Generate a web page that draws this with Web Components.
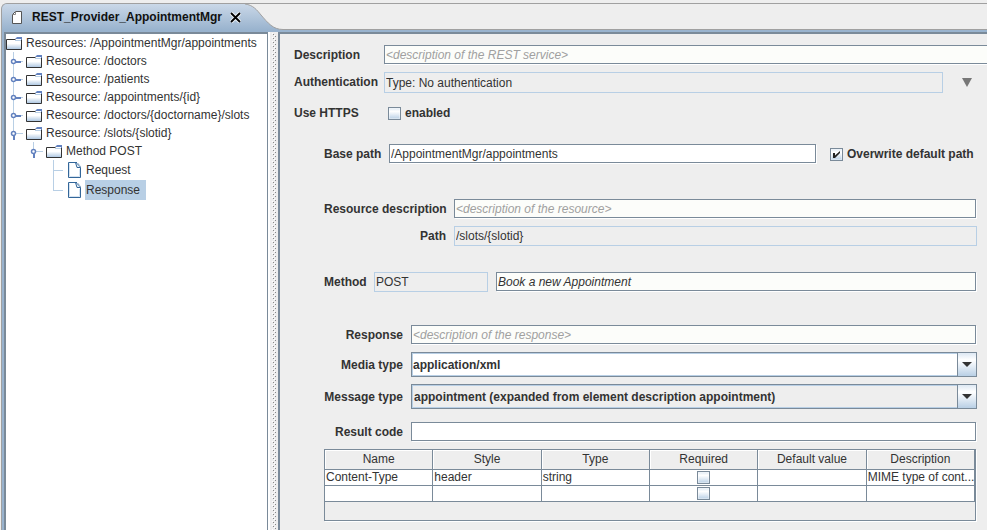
<!DOCTYPE html>
<html lang="en">
<head>
<meta charset="utf-8">
<title>REST_Provider_AppointmentMgr</title>
<style>
  html, body { height: 100%; }
  body {
    margin: 0; background: #eee; overflow: hidden;
    font: 12px/16px "Liberation Sans", Arial, sans-serif; color: #333;
    --line: #7a8a99; --soft: #b8cfe5; --blue: #99b3ce; --bg: #eee;
    --metal: linear-gradient(#dde8f3, #fff 30%, #e3ecf5 60%, #b8cfe5);
  }
</style>
</head>
<body>
<editor-window>
  <editor-tab slot="tab">REST_Provider_AppointmentMgr</editor-tab>
  <tree-node slot="tree" open="root" label="Resources: /AppointmentMgr/appointments">
    <tree-node handle="closed" label="Resource: /doctors"></tree-node>
    <tree-node handle="closed" label="Resource: /patients"></tree-node>
    <tree-node handle="closed" label="Resource: /appointments/{id}"></tree-node>
    <tree-node handle="closed" label="Resource: /doctors/{doctorname}/slots"></tree-node>
    <tree-node handle="open" label="Resource: /slots/{slotid}">
      <tree-node handle="open" label="Method POST">
        <tree-node handle="mid" icon="file" label="Request"></tree-node>
        <tree-node handle="last" icon="file" label="Response" selected></tree-node>
      </tree-node>
    </tree-node>
  </tree-node>
  <service-form></service-form>
</editor-window>

<script>
const define = (name, render) => customElements.define(name, class extends HTMLElement {
  connectedCallback() {
    if (this.shadowRoot) return;
    this.attachShadow({ mode: 'open' }).innerHTML = render(this);
  }
});
const attr = (el, name, fallback = '') => el.getAttribute(name) ?? fallback;
const esc = s => s.replace(/&/g, '&amp;').replace(/</g, '&lt;').replace(/"/g, '&quot;');

define('editor-window', () => `
<style>
  :host { display: flex; flex-direction: column; box-sizing: border-box; height: 100vh; padding: 3px 0 0 1px; }
  .frame { flex: 1; min-height: 0; display: flex; flex-direction: column; background: var(--blue);
    border: solid #a0a0a0; border-width: 1px 0 0 1px; border-top-left-radius: 6px; overflow: hidden; }
  .strip { display: flex; height: 26px; }
  .rest { flex: 1; background: var(--bg); border-bottom: 1px solid #a0a0a0; }
  .body { flex: 1; min-height: 0; display: flex; padding: 2px 0 0 2px; }
  nav { flex: 0 0 261px; background: #fff; border: solid var(--line); border-width: 2px 1px 0 2px; overflow: hidden; }
  .split { flex: 0 0 8px; border-left: 2px solid #fff; background:
    repeating-linear-gradient(#888 0 1px, transparent 1px 4px) 3px 2px / 1px 100% no-repeat,
    repeating-linear-gradient(#888 0 1px, transparent 1px 4px) 5px 4px / 1px 100% no-repeat,
    repeating-linear-gradient(#fff 0 1px, transparent 1px 4px) 2px 1px / 1px 100% no-repeat,
    repeating-linear-gradient(#fff 0 1px, transparent 1px 4px) 4px 3px / 1px 100% no-repeat, var(--bg); }
  main { flex: 1; min-width: 0; background: var(--bg); border: solid var(--line); border-width: 2px 0 0 2px; overflow: hidden; }
</style>
<div class="frame">
  <div class="strip"><slot name="tab"></slot><div class="rest"></div></div>
  <div class="body">
    <nav aria-label="Resources" role="tree"><slot name="tree"></slot></nav>
    <div class="split" role="separator"></div>
    <main><slot></slot></main>
  </div>
</div>`);

define('editor-tab', () => `
<style>
  :host { display: flex; --tab: linear-gradient(#cad8e8, #99b3ce); }
  .tab { display: flex; align-items: center; box-sizing: border-box; min-width: 241px; padding: 0 2px 0 10px;
    background: var(--tab); color: #111; font-weight: bold; }
  .name { flex: 1; padding-left: 10px; }
  svg { display: block; }
  button { padding: 0; margin-left: 8px; border: 0; background: none; }
  .slant { flex: none; }
</style>
<div class="tab">
  <svg width="10" height="13" viewBox="0 0 10 13"><path d="M3.5.5h6v12h-9v-9z" fill="#fff" stroke="#555"/><path d="M3.5.5v3h-3" fill="none" stroke="#888"/></svg>
  <span class="name"><slot></slot></span>
  <button aria-label="Close tab"><svg width="11" height="11" viewBox="0 0 11 11"><path d="M1 1l9 9M10 1l-9 9" stroke="#fff" stroke-width="4" opacity=".75"/><path d="M1 1l9 9M10 1l-9 9" stroke="#000" stroke-width="1.8"/></svg></button>
</div>
<svg class="slant" width="40" height="26" viewBox="0 0 40 26">
  <defs><linearGradient id="g" x2="0" y2="1"><stop stop-color="#cad8e8"/><stop offset="1" stop-color="#99b3ce"/></linearGradient></defs>
  <rect width="40" height="26" fill="#eee"/>
  <path d="M0 0H2C10 1 14 6 18 11C25 19 30 25.500 40 25.500V26H0z" fill="url(#g)"/>
  <path d="M2 0C10 1 14 6 18 11C25 19 30 25.500 40 25.500" fill="none" stroke="#a0a0a0"/>
</svg>`);

const FOLDER = `<svg width="19" height="18" viewBox="0 0 19 18">
  <defs><linearGradient id="f" x2="0" y2="1"><stop stop-color="#fff"/><stop offset=".4" stop-color="#fff"/><stop offset="1" stop-color="#a9c4e0"/></linearGradient></defs>
  <path d="M.5 5.500H15.500V15.500H.5z" fill="url(#f)"/>
  <path d="M9 6.500H15.500" stroke="#b8cfe5"/>
  <path d="M9.500 5.500H.5V15.500H15.500V6" fill="none" stroke="#333"/>
  <path d="M9 5L11 3H16V6H14V5z" fill="#6382bf"/><path d="M10 5.500H15" stroke="#fff"/></svg>`;
const FILE = `<svg width="19" height="20" viewBox="0 0 19 20">
  <path d="M2.500 2.500H9.500L14.500 7.500V17.500H2.500z" fill="#fff" stroke="#336699"/>
  <path d="M3.500 16.500V3.500M4 16.500H13.500V9" fill="none" stroke="#d5e3f1"/>
  <path d="M9.500 2.500L11 7.500H14.500" fill="#e8f0f8" stroke="#336699"/><path d="M9 2.500h2l3.500 4" fill="none" stroke="#336699" stroke-dasharray="2 1"/></svg>`;

function handle(kind) {
  const p = {
    closed: `<path d="M7.500 0V18M11 9.500H17" stroke="#b8cfe5"/><path d="M9 10H15" stroke="#6382bf" stroke-width="2"/><circle cx="7.500" cy="9.500" r="2" fill="#fff" stroke="#6382bf" stroke-width="1.500"/>`,
    open: `<path d="M7.500 0V8M10 9.500H17" stroke="#b8cfe5"/><path d="M8 11V16" stroke="#6382bf" stroke-width="2"/><circle cx="7.500" cy="9.500" r="2" fill="#fff" stroke="#6382bf" stroke-width="1.500"/>`,
    mid: `<path d="M7.500 0V20M7 10.500H17" stroke="#b8cfe5"/>`,
    last: `<path d="M7.500 0V11M7 10.500H17" stroke="#b8cfe5"/>`
  }[kind];
  return p ? `<svg width="20" height="${kind === 'mid' || kind === 'last' ? 20 : 18}">${p}</svg>` : '';
}

define('tree-node', el => {
  const file = attr(el, 'icon') === 'file', root = el.hasAttribute('open');
  return `
<style>
  :host { display: block; white-space: nowrap; }
  .row { display: flex; height: ${file ? 20 : 18}px; line-height: ${file ? 20 : 18}px; }
  svg { flex: none; display: block; }
  .label { padding: 0 6px 0 1px; }
  :host([selected]) .label { background: var(--soft); }
  .kids { padding-left: ${root ? 0 : 20}px; }
</style>
<div role="treeitem"><div class="row">${handle(attr(el, 'handle'))}${file ? FILE : FOLDER}<span class="label">${esc(attr(el, 'label'))}</span></div>
<div class="kids" role="group"><slot></slot></div></div>`;
});

const FIELD_CSS = `
  * { box-sizing: border-box; }
  label { flex: 0 0 var(--label, auto); min-width: 0; padding-right: 8px; font-weight: bold; line-height: 20px; text-align: right; white-space: nowrap; }
  :host([left]) label { padding-right: 0; text-align: left; }`;

define('text-field', el => `
<style>
  ${FIELD_CSS}
  :host { display: flex; min-width: 0; }
  input { flex: 1; min-width: 0; width: 0; height: 19px; margin: 0 1px 0 0; padding: 0 1px; border: 1px solid var(--line); border-radius: 0;
    background: #fff; box-shadow: 1px 1px #fff; font: inherit; color: inherit; outline: 0; }
  input::placeholder { color: #a0a0a0; opacity: 1; }
  :host([italic]) input { font-style: italic; background: #fcfdfa; }
  input:read-only { height: 20px; margin: 0; border-color: var(--soft); background: var(--bg); box-shadow: none; }
  :host([tall]) input { height: 21px; }
</style>
${el.hasAttribute('label') ? `<label for="i">${attr(el, 'label')}</label>` : ''}
<input id="i" type="text" value="${esc(attr(el, 'value'))}" placeholder="${esc(attr(el, 'placeholder'))}"
  ${el.hasAttribute('label') ? '' : `aria-label="${attr(el, 'name')}"`} ${el.hasAttribute('readonly') ? 'readonly' : ''}>`);

define('check-box', el => `
<style>
  :host { display: flex; align-items: center; font-weight: bold; white-space: nowrap; }
  label { padding-left: 4px; }
  input { appearance: none; flex: none; display: block; width: 13px; height: 13px; margin: 0; border: 1px solid var(--line);
    background: var(--metal); box-shadow: inset 0 0 0 1px #ffffff66; }
  .box { display: grid; }
  .box > * { grid-area: 1 / 1; }
  svg { display: none; pointer-events: none; }
  input:checked + svg { display: block; }
</style>
<span class="box"><input id="c" type="checkbox" ${el.hasAttribute('checked') ? 'checked' : ''} ${el.hasAttribute('label') ? '' : 'aria-label="Required"'}>
<svg width="13" height="13" viewBox="0 0 13 13"><path d="M3 5H5V7.500L10 3V5L5 10H3z" fill="#222"/></svg></span>
${el.hasAttribute('label') ? `<label for="c">${attr(el, 'label')}</label>` : ''}`);

define('combo-box', el => `
<style>
  ${FIELD_CSS}
  :host { display: flex; align-items: center; }
  .box { flex: 1; min-width: 0; display: grid; grid-template-columns: 1fr 20px; height: 25px; }
  select { grid-area: 1 / 1 / 2 / 3; appearance: none; width: 100%; height: 25px; margin: 0; padding: 0 22px 0 1px; border: 1px solid var(--line);
    border-radius: 0; background: #fff; box-shadow: inset 0 0 0 1px var(--soft); font: inherit; font-weight: bold; color: inherit; outline: 0; }
  :host([plain]) select { background: var(--bg); padding-left: 2px; }
  .arrow { grid-area: 1 / 2; display: grid; place-items: center; border: 1px solid var(--line); background: var(--metal); pointer-events: none; }
</style>
<label for="s">${attr(el, 'label')}</label>
<span class="box"><select id="s"><option>${attr(el, 'value')}</option></select>
<span class="arrow"><svg width="10" height="5"><path d="M0 0H10L5 5z" fill="#333"/></svg></span></span>`);

define('param-table', () => `
<style>
  :host { display: block; margin-right: 1px; padding-bottom: 18px; border: 1px solid var(--line); box-shadow: 1px 1px #fff; }
  table { width: 100%; table-layout: fixed; border-spacing: 0; }
  th, td { box-sizing: border-box; padding: 0 1px; border: solid var(--line); border-width: 0 1px 1px 0; overflow: hidden; white-space: nowrap; }
  th { height: 20px; line-height: 19px; font-weight: normal; box-shadow: inset 1px 1px #fff; }
  td { height: 16px; line-height: 15px; background: #fff; }
  check-box { justify-content: center; }
</style>
<table>
  <thead><tr><th>Name</th><th>Style</th><th>Type</th><th>Required</th><th>Default value</th><th>Description</th></tr></thead>
  <tbody>
    <tr><td>Content-Type</td><td>header</td><td>string</td><td><check-box></check-box></td><td></td><td>MIME type of cont...</td></tr>
    <tr><td></td><td></td><td></td><td><check-box></check-box></td><td></td><td></td></tr>
  </tbody>
</table>`);

define('service-form', () => `
<style>
  :host { display: block; padding: 11px 10px 8px 14px; }
  form { display: flex; flex-direction: column; }
  section { display: flex; flex-direction: column; gap: 7px; }
  .general { --label: 90px; }
  .wide { margin-right: -12px; }
  .line { display: flex; }
  .grow { flex: 1; }
  .https { height: 26px; align-items: center; gap: 4px; }
  .https span { flex: 0 0 90px; font-weight: bold; }
  .more { width: 20px; margin-left: 14px; padding: 0; border: 0; background: none; }
  .more svg { display: block; margin: auto; }
  .base { --label: 65px; margin: 18px 0 0 30px; }
  .base check-box { flex: 0 0 147px; margin-left: 13px; }
  .resource { --label: 130px; margin: 35px 0 0 30px; }
  .method { --label: 50px; margin: 26px 0 0 30px; }
  .verb { flex: 0 0 164px; margin-right: 8px; }
  .response { --label: 87px; margin: 33px 0 0 30px; }
  .code { margin-top: 6px; }
</style>
<form>
  <section class="general">
    <text-field class="wide" left italic label="Description" placeholder="&lt;description of the REST service&gt;"></text-field>
    <div class="line"><text-field class="grow" left readonly tall label="Authentication" value="Type: No authentication"></text-field>
      <button class="more" type="button" aria-label="More"><svg width="10" height="9"><path d="M0 0H10L5 9z" fill="#777"/></svg></button></div>
    <div class="line https"><span>Use HTTPS</span><check-box label="enabled"></check-box></div>
  </section>
  <section class="base"><div class="line"><text-field class="grow" left label="Base path" value="/AppointmentMgr/appointments"></text-field>
    <check-box checked label="Overwrite default path"></check-box></div></section>
  <section class="resource">
    <text-field left italic label="Resource description" placeholder="&lt;description of the resource&gt;"></text-field>
    <text-field readonly label="Path" value="/slots/{slotid}"></text-field>
  </section>
  <section class="method"><div class="line"><text-field class="verb" left readonly label="Method" value="POST"></text-field>
    <text-field class="grow" italic name="Method description" value="Book a new Appointment"></text-field></div></section>
  <section class="response">
    <text-field italic label="Response" placeholder="&lt;description of the response&gt;"></text-field>
    <combo-box label="Media type" value="application/xml"></combo-box>
    <combo-box plain label="Message type" value="appointment (expanded from element description appointment)"></combo-box>
    <text-field class="code" label="Result code"></text-field>
    <param-table></param-table>
  </section>
</form>`);
</script>
</body>
</html>
